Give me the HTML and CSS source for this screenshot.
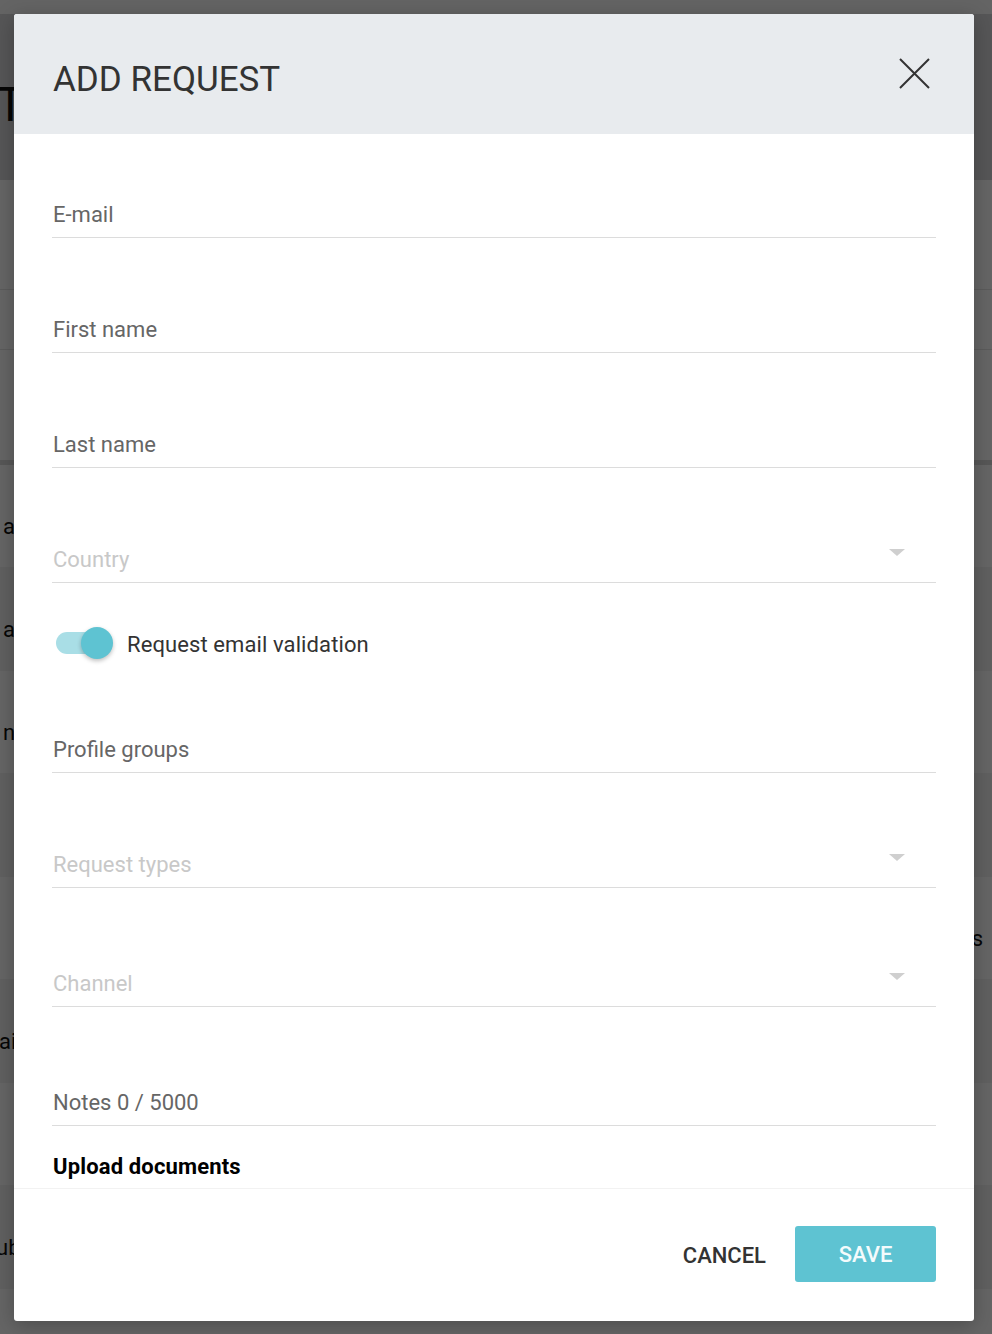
FILE: index.html
```html
<!DOCTYPE html>
<html lang="en">
<head>
<meta charset="utf-8">
<title>Add request</title>
<link rel="stylesheet" href="styles.css">
</head>
<body>
<div class="page">
  <div class="page-top"></div>
  <div class="page-header"><span class="page-title">T</span></div>
  <div class="page-filters">
    <div class="filter-row f1"></div>
    <div class="filter-row f2"></div>
    <div class="filter-row f3"></div>
  </div>
  <div class="table">
    <div class="trow"><span class="cell-left">a</span></div>
    <div class="trow alt"><span class="cell-left">a</span></div>
    <div class="trow"><span class="cell-left">n</span></div>
    <div class="trow alt"><span class="cell-left"></span></div>
    <div class="trow"><span class="cell-right">s</span></div>
    <div class="trow alt"><span class="cell-left shift">ai</span></div>
    <div class="trow"><span class="cell-left"></span></div>
    <div class="trow alt"><span class="cell-left shift2">ub</span></div>
    <div class="trow"></div>
  </div>
</div>
<div class="overlay"></div>

<div class="modal" role="dialog" aria-labelledby="modal-title">
  <div class="modal-header">
    <h1 id="modal-title" class="modal-title">ADD REQUEST</h1>
    <button class="close-btn" aria-label="Close">
      <svg width="31" height="31" viewBox="0 0 31 31"><path d="M1 1 L30 30 M30 1 L1 30" stroke="#333" stroke-width="2" fill="none"/></svg>
    </button>
  </div>
  <div class="modal-body">
    <div class="field first"><span class="label">E-mail</span></div>
    <div class="field"><span class="label">First name</span></div>
    <div class="field"><span class="label">Last name</span></div>
    <div class="field select"><span class="label placeholder">Country</span><span class="caret"></span></div>
    <div class="toggle-row">
      <span class="toggle"><span class="track"></span><span class="knob"></span></span>
      <span class="toggle-label">Request email validation</span>
    </div>
    <div class="field after-toggle"><span class="label">Profile groups</span></div>
    <div class="field select"><span class="label placeholder">Request types</span><span class="caret"></span></div>
    <div class="field select tall"><span class="label placeholder">Channel</span><span class="caret"></span></div>
    <div class="field tall"><span class="label">Notes 0 / 5000</span></div>
    <h2 class="upload-title">Upload documents</h2>
    <div class="upload-area"></div>
  </div>
  <div class="modal-footer">
    <button class="btn-cancel">CANCEL</button>
    <button class="btn-save">SAVE</button>
  </div>
</div>
</body>
</html>
```

FILE: styles.css
```css
* { box-sizing: border-box; }
html, body { margin: 0; padding: 0; }
body {
  width: 992px;
  height: 1334px;
  overflow: hidden;
  font-family: Roboto, "Liberation Sans", sans-serif;
  background: #f2f2f2;
  position: relative;
}

/* background page (under the overlay) */
.page { width: 992px; }
.page-top { height: 14px; background: #fafafa; }
.page-header {
  height: 166px;
  background: #d6d8da;
  display: flex;
  align-items: center;
  padding-top: 16px;
}
.page-title {
  font-size: 48px;
  color: #111;
  margin-left: -4px;
  line-height: 1;
}
.filter-row { border-bottom: 1px solid #e4e4e4; background: #fcfcfc; }
.f1 { height: 110px; }
.f2 { height: 60px; }
.f3 { height: 115px; border-bottom: 5px solid #dadada; }
.trow {
  height: 103px;
  background: #fcfcfc;
  border-bottom: 1px solid #f0f0f0;
  display: flex;
  align-items: center;
  justify-content: space-between;
  padding-top: 20px;
  font-size: 22px;
  color: #111;
}
.trow.alt { background: #f1f1f1; }
.cell-left { padding-left: 3px; }
.cell-left.shift { padding-left: 0; margin-left: -1px; }
.cell-left.shift2 { margin-left: -4px; padding-left: 0; }
.cell-right { margin-left: auto; padding-right: 9px; }

.overlay {
  position: absolute;
  inset: 0;
  background: rgba(0, 0, 0, 0.6);
}

/* modal */
.modal {
  position: absolute;
  left: 14px;
  top: 14px;
  width: 960px;
  height: 1307px;
  background: #fff;
  border-radius: 3px;
  display: flex;
  flex-direction: column;
  overflow: hidden;
  box-shadow: 0 4px 20px rgba(0,0,0,0.25);
}
.modal-header {
  height: 120px;
  flex: none;
  background: #e8ebee;
  display: flex;
  align-items: center;
  justify-content: space-between;
  padding: 10px 44px 0 39px;
}
.modal-title {
  margin: 0;
  font-size: 35px;
  font-weight: 400;
  color: #333;
  letter-spacing: 0;
}
.close-btn {
  border: 0;
  background: none;
  padding: 0;
  margin-top: -12px;
  width: 31px;
  height: 31px;
  display: block;
}
.close-btn svg { display: block; }

.modal-body {
  flex: 1;
  overflow: hidden;
  padding: 0 38px;
  display: flex;
  flex-direction: column;
}
.field {
  flex: none;
  position: relative;
  padding: 69px 0 10px 1px;
  margin-top: 11px;
  border-bottom: 1px solid #dcdcdc;
  display: flex;
  align-items: center;
}
.field.first { margin-top: 0; }
.field.tall { margin-top: 15px; }
.field.after-toggle { margin-top: 0; padding-top: 65px; }
.label {
  font-size: 22px;
  line-height: 24px;
  color: #666;
}
.label.placeholder { color: #c8c8c8; }
.caret {
  position: absolute;
  right: 31px;
  top: 70px;
  width: 0;
  height: 0;
  border-left: 8px solid transparent;
  border-right: 8px solid transparent;
  border-top: 7px solid #cfcfcf;
}

.toggle-row {
  flex: none;
  height: 60px;
  margin-top: 30px;
  display: flex;
  align-items: center;
  padding-left: 4px;
}
.toggle {
  position: relative;
  width: 57px;
  height: 32px;
  flex: none;
}
.track {
  position: absolute;
  left: 0;
  top: 5px;
  width: 54px;
  height: 22px;
  border-radius: 11px;
  background: #a9dee6;
}
.knob {
  position: absolute;
  left: 25px;
  top: 0;
  width: 32px;
  height: 32px;
  border-radius: 50%;
  background: #5ec3d2;
  box-shadow: 0 2px 4px rgba(0,0,0,0.25);
}
.toggle-label {
  margin-left: 14px;
  font-size: 22px;
  letter-spacing: 0.1px;
  color: #333;
  margin-top: 2px;
}

.upload-title {
  flex: none;
  margin: 29px 0 0 1px;
  font-size: 22px;
  letter-spacing: 0.15px;
  line-height: 24px;
  font-weight: 700;
  color: #000;
}
.upload-area { flex: none; height: 120px; }

.modal-footer {
  height: 133px;
  flex: none;
  border-top: 1px solid #f2f2f2;
  display: flex;
  align-items: center;
  justify-content: flex-end;
  padding: 0 38px 0 0;
  gap: 13px;
}
.btn-cancel {
  border: 0;
  background: none;
  font-family: inherit;
  font-size: 22px;
  font-weight: 500;
  color: #333;
  padding: 0 16px;
  height: 56px;
}
.btn-save {
  border: 0;
  width: 141px;
  height: 56px;
  border-radius: 3px;
  background: #5ec3d2;
  color: #f4fbfc;
  font-family: inherit;
  font-size: 22px;
  font-weight: 500;
  margin-top: -2px;
}
```
